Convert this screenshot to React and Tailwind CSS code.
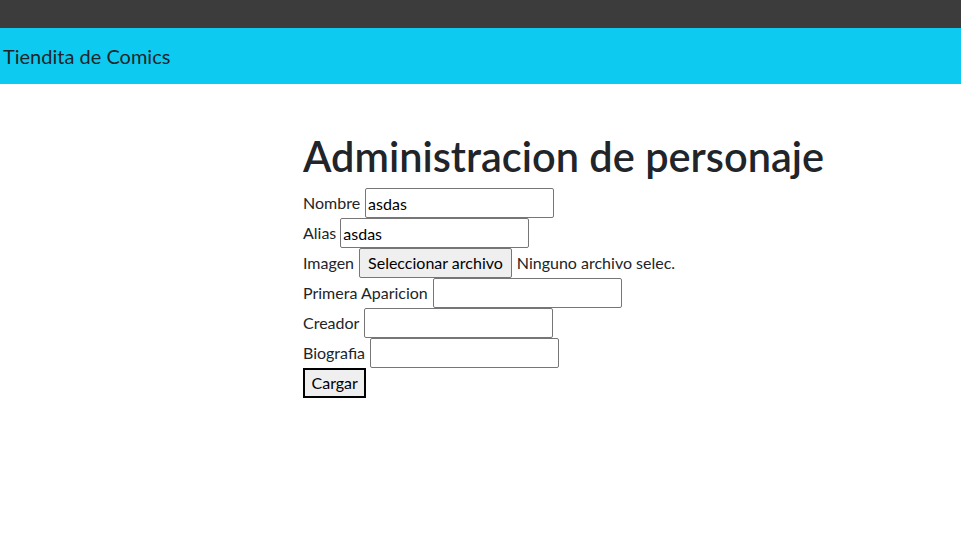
export default function App() {
  const input = "w-[189px] h-[30px] border border-[#767676] rounded-[2px] px-[2px] text-black bg-white";
  return (
    <div className="min-h-[551px] bg-white text-[#212529] text-[16px] leading-[1.5] font-['Lato',sans-serif]">
      <div className="h-[28px] bg-[#3c3c3c]" />
      <div className="h-[56px] bg-[#0dcaf0] flex items-center pl-[3px]">
        <span className="text-[20px] leading-[1.5]">Tiendita de Comics</span>
      </div>
      <div className="pl-[303px] pt-[48px]">
        <h1 className="text-[41.5px] leading-[48px] font-semibold mb-[8px]">Administracion de personaje</h1>
        <form className="flex flex-col">
          <div className="h-[30px] flex items-center gap-[5px]">
            <label>Nombre</label>
            <input className={input} defaultValue="asdas" />
          </div>
          <div className="h-[30px] flex items-center gap-[4px]">
            <label>Alias</label>
            <input className={input} defaultValue="asdas" />
          </div>
          <div className="h-[30px] flex items-center gap-[5px]">
            <label>Imagen</label>
            <span className="h-[30px] flex items-center px-[8px] bg-[#efefef] border border-[#767676] rounded-[2px] text-black">Seleccionar archivo</span>
            <span>Ninguno archivo selec.</span>
          </div>
          <div className="h-[30px] flex items-center gap-[5px]">
            <label>Primera Aparicion</label>
            <input className={input} />
          </div>
          <div className="h-[30px] flex items-center gap-[5px]">
            <label>Creador</label>
            <input className={input} />
          </div>
          <div className="h-[30px] flex items-center gap-[5px]">
            <label>Biografia</label>
            <input className={input} />
          </div>
          <div className="h-[30px] flex items-center">
            <button type="button" className="h-[30px] px-[6.5px] bg-[#efefef] border-2 border-black text-black">Cargar</button>
          </div>
        </form>
      </div>
    </div>
  );
}
